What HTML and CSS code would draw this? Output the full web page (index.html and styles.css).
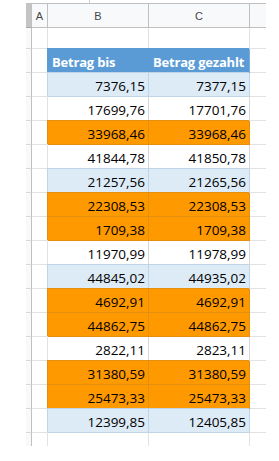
FILE: index.html
```html
<!DOCTYPE html>
<html>
<head>
<meta charset="utf-8">
<link rel="stylesheet" href="styles.css">
</head>
<body>
<div class="topstrip"><span class="tick"></span></div>
<div class="sheet">
  <div class="c corner"></div>
  <div class="c colhead">A</div>
  <div class="c colhead">B</div>
  <div class="c colhead">C</div>
  <div class="c colhead last"></div>

  <div class="c rowhead r1"></div>
  <div class="c cell r1"></div>
  <div class="c cell r1"></div>
  <div class="c cell r1"></div>
  <div class="c cell r1 last"></div>

  <div class="c rowhead rt"></div>
  <div class="c cell rt"></div>
  <div class="c th">Betrag bis</div>
  <div class="c th">Betrag gezahlt</div>
  <div class="c cell rt last"></div>

  <div class="c rowhead rt"></div><div class="c cell rt"></div><div class="c num blue">7376,15</div><div class="c num blue">7377,15</div><div class="c cell rt last"></div>
  <div class="c rowhead rt"></div><div class="c cell rt"></div><div class="c num white">17699,76</div><div class="c num white">17701,76</div><div class="c cell rt last"></div>
  <div class="c rowhead rt"></div><div class="c cell rt"></div><div class="c num orange">33968,46</div><div class="c num orange">33968,46</div><div class="c cell rt last"></div>
  <div class="c rowhead rt"></div><div class="c cell rt"></div><div class="c num white">41844,78</div><div class="c num white">41850,78</div><div class="c cell rt last"></div>
  <div class="c rowhead rt"></div><div class="c cell rt"></div><div class="c num blue">21257,56</div><div class="c num blue">21265,56</div><div class="c cell rt last"></div>
  <div class="c rowhead rt"></div><div class="c cell rt"></div><div class="c num orange">22308,53</div><div class="c num orange">22308,53</div><div class="c cell rt last"></div>
  <div class="c rowhead rt"></div><div class="c cell rt"></div><div class="c num orange">1709,38</div><div class="c num orange">1709,38</div><div class="c cell rt last"></div>
  <div class="c rowhead rt"></div><div class="c cell rt"></div><div class="c num white">11970,99</div><div class="c num white">11978,99</div><div class="c cell rt last"></div>
  <div class="c rowhead rt"></div><div class="c cell rt"></div><div class="c num blue">44845,02</div><div class="c num blue">44935,02</div><div class="c cell rt last"></div>
  <div class="c rowhead rt"></div><div class="c cell rt"></div><div class="c num orange">4692,91</div><div class="c num orange">4692,91</div><div class="c cell rt last"></div>
  <div class="c rowhead rt"></div><div class="c cell rt"></div><div class="c num orange">44862,75</div><div class="c num orange">44862,75</div><div class="c cell rt last"></div>
  <div class="c rowhead rt"></div><div class="c cell rt"></div><div class="c num white">2822,11</div><div class="c num white">2823,11</div><div class="c cell rt last"></div>
  <div class="c rowhead rt"></div><div class="c cell rt"></div><div class="c num orange">31380,59</div><div class="c num orange">31380,59</div><div class="c cell rt last"></div>
  <div class="c rowhead rt"></div><div class="c cell rt"></div><div class="c num orange">25473,33</div><div class="c num orange">25473,33</div><div class="c cell rt last"></div>
  <div class="c rowhead rt"></div><div class="c cell rt"></div><div class="c num blue">12399,85</div><div class="c num blue">12405,85</div><div class="c cell rt last"></div>

  <div class="c rowhead rend"></div>
  <div class="c cell rend"></div>
  <div class="c cell rend"></div>
  <div class="c cell rend"></div>
  <div class="c cell rend last"></div>
</div>
</body>
</html>
```
FILE: styles.css
```css
html, body {
  margin: 0;
  padding: 0;
  background: #ffffff;
}
.topstrip {
  height: 3px;
  display: flex;
}
.tick {
  width: 1px;
  height: 3px;
  margin-left: 89px;
  background: #d0d0d0;
}
.sheet {
  margin-left: 26px;
  width: 240px;
  display: grid;
  grid-template-columns: 6px 16px 101px 101px 16px;
  grid-auto-rows: 24px;
  grid-template-rows: 25px 21px;
  font-family: "Open Sans", "Liberation Sans", sans-serif;
}
.c {
  box-sizing: border-box;
  border-right: 1px solid #e2e2e2;
  border-bottom: 1px solid #e2e2e2;
  position: relative;
}
.c.last {
  border-right: none;
}
.corner {
  background: #c4c4c4;
  border-top: 1px solid #c0c0c0;
  border-right: 1px solid #c0c0c0;
  border-bottom: 1px solid #a8a8a8;
}
.colhead {
  background: #f8f9fa;
  border-top: 1px solid #c0c0c0;
  border-right: 1px solid #c0c0c0;
  border-bottom: 1px solid #c0c0c0;
  font-family: "Liberation Sans", Arial, sans-serif;
  font-size: 11px;
  color: #444746;
  display: flex;
  align-items: center;
  justify-content: center;
  padding-top: 1px;
}
.colhead.last {
  border-right: none;
}
.rowhead {
  background: #f8f9fa;
  border-right: 1px solid #c0c0c0;
  border-bottom: 1px solid #d8d8d8;
}
.rend {
  border-bottom: none;
  height: 13px;
}
.th {
  background: #5b9bd5;
  border-right: 1px solid #7aaedc;
  border-bottom: 1px solid #5b9bd5;
  box-shadow: -1px -1px 0 0 #5b9bd5;
  color: #ffffff;
  font-weight: 700;
  font-size: 13px;
  display: flex;
  align-items: center;
  padding: 2px 0 0 4px;
  white-space: nowrap;
  letter-spacing: -0.2px;
}
.num {
  display: flex;
  align-items: center;
  justify-content: flex-end;
  padding: 2px 3px 0 0;
  font-size: 13.5px;
  color: #000000;
}
.blue {
  background: #ddebf7;
  border-right: 1px solid #c1d4e6;
  border-bottom: 1px solid #c1d4e6;
  box-shadow: -1px -1px 0 0 #c1d4e6;
}
.orange {
  background: #ff9900;
  border-right: 1px solid #e58f10;
  border-bottom: 1px solid #e58f10;
  box-shadow: -1px -1px 0 0 #e58f10;
}
.white {
  background: #ffffff;
  border-right: 1px solid #d6d6d6;
  border-bottom: 1px solid #d6d6d6;
}
```
